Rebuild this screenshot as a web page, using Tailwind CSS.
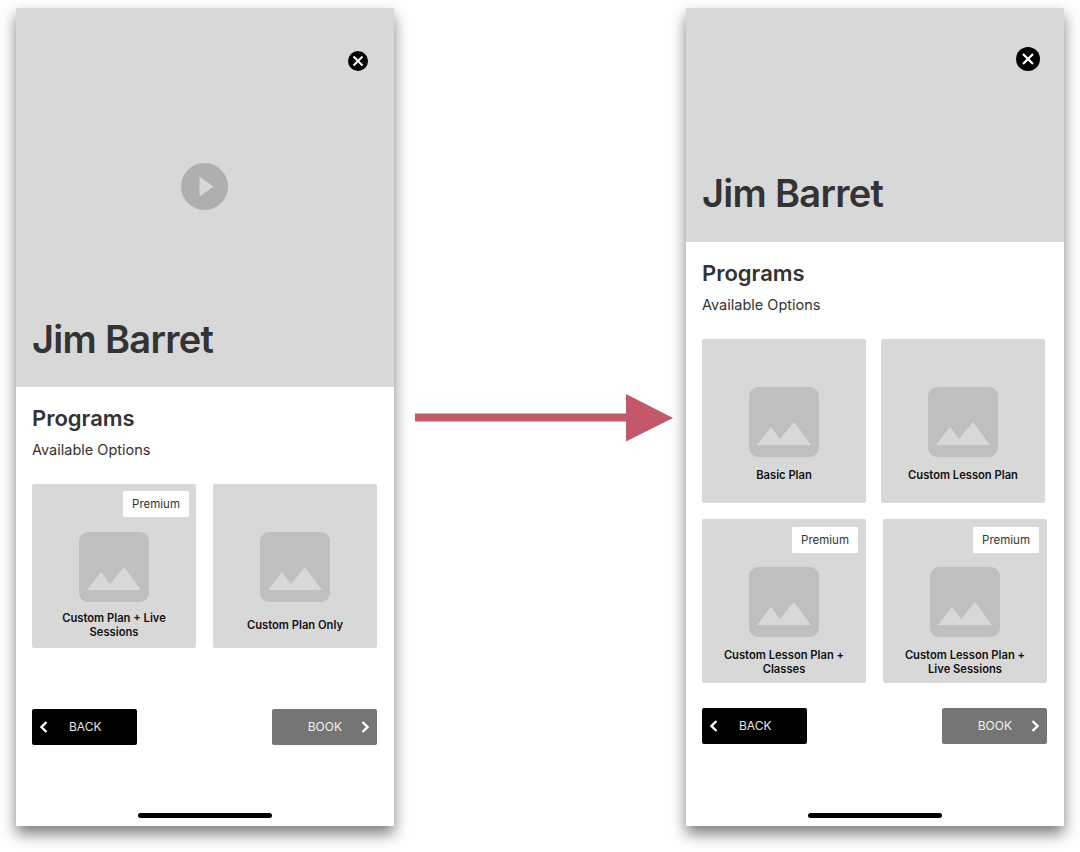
<!DOCTYPE html>
<html lang="en">
<head>
    <meta charset="UTF-8">
    <title>Jim Barret flow</title>
    <script src="https://cdn.jsdelivr.net/npm/@tailwindcss/browser@4"></script>
</head>
<body class="bg-white font-['Inter',sans-serif] text-[#333333]">
    <div class="relative w-[1080px] h-[852px] overflow-hidden flex items-start pt-2 pl-4">

        <!-- first screen -->
        <div class="w-[378px] h-[818px] flex flex-col bg-white shadow-[0_8px_14px_rgba(0,0,0,0.5)]">
            <div class="h-[379px] bg-[#d8d8d8] flex flex-col px-4">
                <div class="flex justify-end pt-[43px] pr-[10.5px]">
                    <svg class="w-5 h-5" viewBox="0 0 20 20"><circle cx="10" cy="10" r="10" fill="#000"/><path d="M5.500 5.500l9 9M14.500 5.500l-9 9" stroke="#fff" stroke-width="2"/></svg>
                </div>
                <div class="flex justify-center mt-[92px] pr-[1px]">
                    <svg class="w-[47px] h-[47px]" viewBox="0 0 47 47"><circle cx="23.5" cy="23.5" r="23.5" fill="#afafaf"/><path d="M18.5 13.5v20l14-10z" fill="#d8d8d8"/></svg>
                </div>
                <h1 class="mt-[106px] text-[38px] leading-[46px] font-semibold tracking-[-0.7px]">Jim Barret</h1>
            </div>
            <div class="flex-1 flex flex-col px-4">
                <h2 class="mt-[17px] text-[22px] leading-[29px] font-semibold">Programs</h2>
                <p class="mt-[7px] text-[14.5px] leading-[20px]">Available Options</p>
                <div class="mt-6 flex gap-[17px]">
                    <div class="relative w-[164px] h-[164px] rounded-[2px] bg-[#d8d8d8] flex flex-col items-center pt-[48px]">
                        <span class="absolute top-[7px] right-[7px] w-[66px] h-[26px] pt-[2px] bg-white rounded-[1px] flex items-center justify-center text-[11.5px]">Premium</span>
                        <svg class="w-[70px] h-[70px]" viewBox="0 0 70 70"><rect width="70" height="70" rx="9" fill="#bfbfbf"/><path d="M8 58L22 40l9 12 14-17 17 23z" fill="#d8d8d8"/></svg>
                        <p class="mt-[9px] w-[130px] text-center text-[11.2px] leading-[14px] font-semibold text-[#111]">Custom Plan + Live Sessions</p>
                    </div>
                    <div class="w-[164px] h-[164px] rounded-[2px] bg-[#d8d8d8] flex flex-col items-center pt-[48px]">
                        <svg class="w-[70px] h-[70px]" viewBox="0 0 70 70"><rect width="70" height="70" rx="9" fill="#bfbfbf"/><path d="M8 58L22 40l9 12 14-17 17 23z" fill="#d8d8d8"/></svg>
                        <p class="mt-4 w-[130px] text-center text-[11.2px] leading-[14px] font-semibold text-[#111]">Custom Plan Only</p>
                    </div>
                </div>
                <div class="mt-[61px] w-[345px] flex justify-between">
                    <div class="w-[105px] h-9 rounded-[2px] bg-black text-white/90 flex items-center pl-2">
                        <svg class="w-2 h-3" viewBox="0 0 8 12"><path d="M6.500 1L1.500 6l5 5" fill="none" stroke="#fff" stroke-width="2.300"/></svg>
                        <span class="ml-[21px] text-[12px]">BACK</span>
                    </div>
                    <div class="w-[105px] h-9 rounded-[2px] bg-[#757575] text-white/90 flex items-center justify-end pr-2">
                        <span class="mr-[19px] text-[12px]">BOOK</span>
                        <svg class="w-2 h-3" viewBox="0 0 8 12"><path d="M1.500 1l5 5-5 5" fill="none" stroke="#fff" stroke-width="2.300"/></svg>
                    </div>
                </div>
                <div class="mt-[68px] mx-auto w-[134px] h-[5px] rounded-full bg-black"></div>
            </div>
        </div>

        <!-- arrow between the screens -->
        <svg class="w-[292px] h-[60px] mt-[378px]" viewBox="0 0 292 60"><path d="M21 27.5h211V8l47 24-47 23.500V35.500H21z" fill="#c4586b"/></svg>

        <!-- second screen -->
        <div class="w-[378px] h-[818px] flex flex-col bg-white shadow-[0_8px_14px_rgba(0,0,0,0.5)]">
            <div class="h-[234px] bg-[#d8d8d8] flex flex-col px-4">
                <div class="flex justify-end pt-[39px] pr-2">
                    <svg class="w-6 h-6" viewBox="0 0 24 24"><circle cx="12" cy="12" r="12" fill="#000"/><path d="M7 7l10 10M17 7L7 17" stroke="#fff" stroke-width="2.300"/></svg>
                </div>
                <h1 class="mt-[99px] text-[38px] leading-[46px] font-semibold tracking-[-0.7px]">Jim Barret</h1>
            </div>
            <div class="flex-1 flex flex-col px-4">
                <h2 class="mt-[17px] text-[22px] leading-[29px] font-semibold">Programs</h2>
                <p class="mt-[7px] text-[14.5px] leading-[20px]">Available Options</p>
                <div class="mt-6 flex gap-[15px]">
                    <div class="w-[164px] h-[164px] rounded-[2px] bg-[#d8d8d8] flex flex-col items-center pt-[48px]">
                        <svg class="w-[70px] h-[70px]" viewBox="0 0 70 70"><rect width="70" height="70" rx="9" fill="#bfbfbf"/><path d="M8 58L22 40l9 12 14-17 17 23z" fill="#d8d8d8"/></svg>
                        <p class="mt-[11px] w-[130px] text-center text-[11.2px] leading-[14px] font-semibold text-[#111]">Basic Plan</p>
                    </div>
                    <div class="w-[164px] h-[164px] rounded-[2px] bg-[#d8d8d8] flex flex-col items-center pt-[48px]">
                        <svg class="w-[70px] h-[70px]" viewBox="0 0 70 70"><rect width="70" height="70" rx="9" fill="#bfbfbf"/><path d="M8 58L22 40l9 12 14-17 17 23z" fill="#d8d8d8"/></svg>
                        <p class="mt-[11px] w-[130px] text-center text-[11.2px] leading-[14px] font-semibold text-[#111]">Custom Lesson Plan</p>
                    </div>
                </div>
                <div class="mt-4 flex gap-[17px]">
                    <div class="relative w-[164px] h-[164px] rounded-[2px] bg-[#d8d8d8] flex flex-col items-center pt-[48px]">
                        <span class="absolute top-2 right-2 w-[66px] h-[26px] pt-[2px] bg-white rounded-[1px] flex items-center justify-center text-[11.5px]">Premium</span>
                        <svg class="w-[70px] h-[70px]" viewBox="0 0 70 70"><rect width="70" height="70" rx="9" fill="#bfbfbf"/><path d="M8 58L22 40l9 12 14-17 17 23z" fill="#d8d8d8"/></svg>
                        <p class="mt-[11px] w-[130px] text-center text-[11.2px] leading-[14px] font-semibold text-[#111]">Custom Lesson Plan + Classes</p>
                    </div>
                    <div class="relative w-[164px] h-[164px] rounded-[2px] bg-[#d8d8d8] flex flex-col items-center pt-[48px]">
                        <span class="absolute top-2 right-2 w-[66px] h-[26px] pt-[2px] bg-white rounded-[1px] flex items-center justify-center text-[11.5px]">Premium</span>
                        <svg class="w-[70px] h-[70px]" viewBox="0 0 70 70"><rect width="70" height="70" rx="9" fill="#bfbfbf"/><path d="M8 58L22 40l9 12 14-17 17 23z" fill="#d8d8d8"/></svg>
                        <p class="mt-[11px] w-[130px] text-center text-[11.2px] leading-[14px] font-semibold text-[#111]">Custom Lesson Plan + Live Sessions</p>
                    </div>
                </div>
                <div class="mt-[25px] w-[345px] flex justify-between">
                    <div class="w-[105px] h-9 rounded-[2px] bg-black text-white/90 flex items-center pl-2">
                        <svg class="w-2 h-3" viewBox="0 0 8 12"><path d="M6.500 1L1.500 6l5 5" fill="none" stroke="#fff" stroke-width="2.300"/></svg>
                        <span class="ml-[21px] text-[12px]">BACK</span>
                    </div>
                    <div class="w-[105px] h-9 rounded-[2px] bg-[#757575] text-white/90 flex items-center justify-end pr-2">
                        <span class="mr-[19px] text-[12px]">BOOK</span>
                        <svg class="w-2 h-3" viewBox="0 0 8 12"><path d="M1.500 1l5 5-5 5" fill="none" stroke="#fff" stroke-width="2.300"/></svg>
                    </div>
                </div>
                <div class="mt-[69px] mx-auto w-[134px] h-[5px] rounded-full bg-black"></div>
            </div>
        </div>
    </div>
</body>
</html>
